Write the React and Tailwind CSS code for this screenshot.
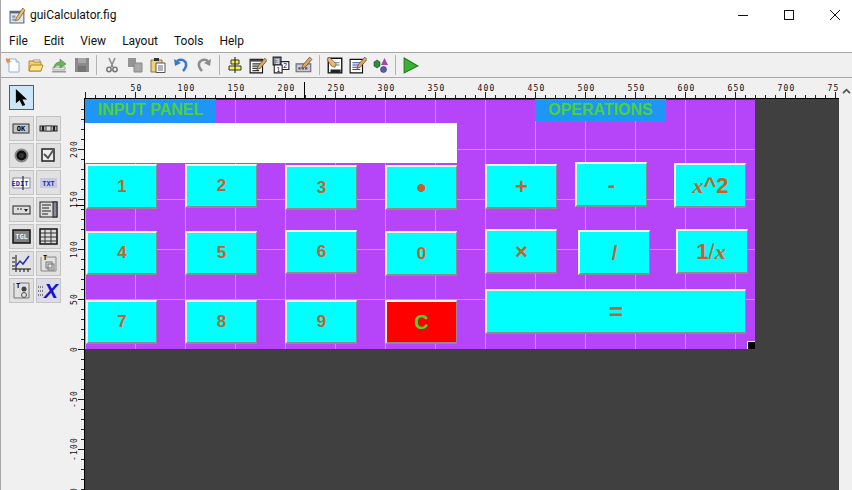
import React from 'react';

const menus = ['File', 'Edit', 'View', 'Layout', 'Tools', 'Help'];

// calculator buttons, placed on the figure canvas (figure origin is x=85, y=99)
const calcButtons = [
  { label: '1', pos: 'left-[1px] top-[65px] w-[71px] h-[45px]' },
  { label: '2', pos: 'left-[100px] top-[65px] w-[72px] h-[44px]' },
  { label: '3', pos: 'left-[200px] top-[66px] w-[72px] h-[45px]' },
  { label: '•', pos: 'left-[300px] top-[66px] w-[72px] h-[45px]', size: 'text-[28px]' },
  { label: '4', pos: 'left-[1px] top-[132px] w-[71px] h-[44px]' },
  { label: '5', pos: 'left-[100px] top-[132px] w-[72px] h-[44px]' },
  { label: '6', pos: 'left-[200px] top-[131px] w-[72px] h-[44px]' },
  { label: '0', pos: 'left-[300px] top-[132px] w-[72px] h-[45px]' },
  { label: '7', pos: 'left-[1px] top-[201px] w-[71px] h-[44px]' },
  { label: '8', pos: 'left-[100px] top-[201px] w-[72px] h-[44px]' },
  { label: '9', pos: 'left-[200px] top-[201px] w-[72px] h-[44px]' },
  { label: '+', pos: 'left-[400px] top-[65px] w-[72px] h-[45px]', size: 'text-[22px]' },
  { label: '-', pos: 'left-[490px] top-[63px] w-[72px] h-[45px]', size: 'text-[22px]' },
  { label: '×', pos: 'left-[400px] top-[130px] w-[72px] h-[45px]', size: 'text-[22px]' },
  { label: '/', pos: 'left-[493px] top-[131px] w-[72px] h-[45px]', size: 'text-[20px]' },
  { label: '=', pos: 'left-[400px] top-[190px] w-[261px] h-[45px]', size: 'text-[24px]' },
];

function Win({ className = 'w-[16px] h-[16px]', children }) {
  return <svg viewBox="0 0 16 16" className={className}>{children}</svg>;
}

const toolbar = [
  // new
  <Win key="new"><path d="M4 2h7l3 3v10H4z" fill="#fff" stroke="#8fb4d8" /><path d="M11 2v3h3" fill="#dfeaf5" stroke="#8fb4d8" /><path d="M1 1l3 1 1-1 0 3 2 1-3 0-1 2-1-2-1-1z" fill="#ef8a4a" /></Win>,
  // open
  <Win key="open"><path d="M5 3h7v5H5z" fill="#fff" stroke="#999" /><path d="M1 4h4l1 1h7v9H1z" fill="#f3cf6a" stroke="#b08a2a" /><path d="M1 14l2-6h12l-2 6z" fill="#fbe391" stroke="#b08a2a" /></Win>,
  // export
  <Win key="export"><path d="M1 14h14v1.5H1z" fill="#999" /><path d="M2 13h12V10H2z" fill="#dfe8d8" stroke="#aaa" /><path d="M3 11c0-4 3-6 6-6V2l6 5-6 4V8c-3 0-5 1-6 3z" fill="#6cb060" stroke="#4a8a40" strokeWidth=".6" /></Win>,
  // save, disabled
  <Win key="save"><path d="M1 1h14v14H1z" fill="#8a8a8a" /><path d="M4 1h8v5H4z" fill="#a8a8a8" /><path d="M4 9h8v6H4z" fill="#757575" /></Win>,
  'sep7',
  // cut
  <Win key="cut"><path d="M5 1l4 9M11 1L7 10" stroke="#8a8a8a" strokeWidth="1.5" fill="none" /><circle cx="5" cy="12.5" r="2.2" fill="none" stroke="#777" strokeWidth="1.5" /><circle cx="11" cy="12.5" r="2.2" fill="none" stroke="#777" strokeWidth="1.5" /></Win>,
  // copy
  <Win key="copy"><path d="M1 1h8v9H1z" fill="#949494" /><path d="M7 6h8v9H7z" fill="#a8a8a8" stroke="#888" /></Win>,
  // paste
  <Win key="paste"><path d="M1 3h11v12H1z" fill="#edd27a" stroke="#8a7a3a" /><path d="M4 1h5v3H4z" fill="#333" /><path d="M6 6h9v9.5H6z" fill="#fff" stroke="#555" /><path d="M8 9h5M8 11h5M8 13h5" stroke="#667" /></Win>,
  // undo
  <Win key="undo"><path d="M4 4c5-3 10 0 9 5-.4 2-1.500 3.500-3 5" stroke="#3a78c8" strokeWidth="2.500" fill="none" /><path d="M1 2l1 7 6-3z" fill="#3a78c8" /></Win>,
  // redo
  <Win key="redo"><path d="M12 4C7 1 2 4 3 9c.4 2 1.500 3.500 3 5" stroke="#8c8c8c" strokeWidth="2.500" fill="none" /><path d="M15 2l-1 7-6-3z" fill="#8c8c8c" /></Win>,
  'sep8',
  // align
  <Win key="align"><path d="M4 3h8v4H4zM2 9h12v4H2z" fill="#f5f04a" stroke="#333" /><path d="M8 0v16" stroke="#111" /></Win>,
  // menu editor
  <Win key="menu" className="w-[18px] h-[18px]"><path d="M1 3h11v12H1z" fill="#fff" stroke="#111" /><path d="M1 3h11v2H1z" fill="#444" /><path d="M3 7h7M3 9h7M3 11h6M3 13h6" stroke="#333" /><path d="M8 9l6-7 2 2-6 7-3 1z" fill="#d8a868" stroke="#6a4a20" strokeWidth=".7" /></Win>,
  // tab order
  <Win key="tab" className="w-[18px] h-[18px]"><path d="M1 1h7v7H1z" fill="#8c8ca8" stroke="#222" /><path d="M8 5h7v7H8z" fill="#fff" stroke="#222" /><path d="M2 8h7v7H2z" fill="#fff" stroke="#222" /><text x="3" y="7" fontSize="6" fontFamily="Liberation Sans" fill="#fff">3</text><text x="4" y="14" fontSize="6" fontFamily="Liberation Sans">1</text><text x="10" y="11" fontSize="6" fontFamily="Liberation Sans">2</text></Win>,
  // toolbar editor
  <Win key="tb" className="w-[18px] h-[18px]"><path d="M1 7h13v7H1z" fill="#c8c8d4" stroke="#667" /><path d="M3 10h2v2H3zM6 10h2v2H6zM9 10h2v2H9z" fill="#556" /><path d="M7 8l6-7 2 2-6 7-3 1z" fill="#d8a868" stroke="#6a4a20" strokeWidth=".7" /></Win>,
  'sep8',
  // m-file editor
  <Win key="mfile" className="w-[18px] h-[18px]"><path d="M2 2h12v13H2z" fill="#fff" stroke="#111" strokeWidth="1.200" /><path d="M4 12h9v3H4z" fill="#222" /><path d="M6 6h6M6 8h6" stroke="#777" /><path d="M1 3l2-2 6 6-1 3-3-1z" fill="#e8b878" stroke="#8a5a2a" strokeWidth=".7" /></Win>,
  // property inspector
  <Win key="prop" className="w-[18px] h-[18px]"><path d="M1 3h11v12H1z" fill="#fff" stroke="#111" /><path d="M3 6h7M3 8h7M3 10h6M3 12h7" stroke="#2a4ab8" /><path d="M8 8l6-7 2 2-6 7-3 1z" fill="#d8a868" stroke="#6a4a20" strokeWidth=".7" /></Win>,
  // object browser
  <Win key="obj"><path d="M1 5l3-2 3 2v4l-3 2-3-2z" fill="#2f8a3a" stroke="#123" strokeWidth=".5" /><path d="M11.500 1l3.500 7H8z" fill="#a04aa8" /><circle cx="10.500" cy="12.500" r="3" fill="#5a5ac0" stroke="#223" strokeWidth=".5" /></Win>,
  'sep7',
  // run
  <Win key="run" className="w-[17px] h-[17px]"><path d="M2 1l13 7.500L2 15z" fill="#3cb034" stroke="#1e7a1e" /></Win>,
];

function Pal({ children, tone = 'bg-[#e1e1e1] border-[#c4c4c4]' }) {
  return (
    <div className={`w-[25px] h-[25px] border flex items-center justify-center ${tone}`}>
      <svg viewBox="0 0 23 23" className="w-[23px] h-[23px]">{children}</svg>
    </div>
  );
}

const mono = { fontFamily: '"DejaVu Sans Mono", monospace', fontWeight: 700 };

const palette = [
  <Pal key="ok"><rect x="3" y="7" width="16" height="9" fill="#c4c4c4" stroke="#333" /><text x="11" y="14" fontSize="7" textAnchor="middle" {...mono}>OK</text></Pal>,
  <Pal key="slider"><rect x="3" y="9" width="17" height="5" fill="#aaa" stroke="#222" /><path d="M6 9v5M17 9v5" stroke="#222" strokeWidth="2" /><rect x="9" y="9" width="5" height="5" fill="#ddd" stroke="#555" /></Pal>,
  <Pal key="radio"><circle cx="11.500" cy="11.500" r="6" fill="#111" stroke="#888" strokeWidth="2" /><circle cx="11.500" cy="11.500" r="2.500" fill="#333" /></Pal>,
  <Pal key="check"><rect x="5" y="5" width="12" height="12" fill="#eee" stroke="#222" strokeWidth="1.500" /><path d="M7 10l4 4 6-9" stroke="#555" strokeWidth="2" fill="none" /></Pal>,
  <Pal key="edit"><rect x="3" y="7" width="17" height="10" fill="#fff" stroke="#88a" /><text x="10" y="15" fontSize="7" textAnchor="middle" fill="#1c2cb0" {...mono}>EDIT</text><path d="M13 5v14" stroke="#111" /></Pal>,
  <Pal key="txt"><rect x="3" y="7" width="17" height="10" fill="#c8c8e0" /><text x="11.500" y="15" fontSize="7" textAnchor="middle" fill="#1c2cb0" {...mono}>TXT</text></Pal>,
  <Pal key="popup"><rect x="3" y="8" width="17" height="8" fill="#ddd" stroke="#222" /><path d="M7 11h2M10 11h2" stroke="#222" /><path d="M14 11h4l-2 3z" fill="#222" /></Pal>,
  <Pal key="list"><rect x="3" y="4" width="17" height="15" fill="#ddd" stroke="#222" /><path d="M5 7h9M5 10h7M5 13h9M5 16h6" stroke="#222" /><rect x="16" y="4" width="4" height="15" fill="#889" stroke="#222" /></Pal>,
  <Pal key="tgl"><rect x="3" y="5" width="17" height="13" fill="#808080" stroke="#111" strokeWidth="1.500" /><text x="11.500" y="14" fontSize="7" textAnchor="middle" fill="#eee" {...mono}>TGL</text></Pal>,
  <Pal key="table"><rect x="3" y="4" width="17" height="15" fill="#ddd" stroke="#111" strokeWidth="1.500" /><path d="M3 8h17M3 12h17M3 16h17M8 4v15M14 4v15" stroke="#333" /></Pal>,
  <Pal key="axes"><path d="M6 3v17M2 17h19M2 14h3M2 10h3M2 6h3M10 17v3M14 17v3M18 17v3" stroke="#111" /><path d="M6 14l4-5 3 3 6-8" stroke="#2030c0" strokeWidth="1.500" fill="none" /></Pal>,
  <Pal key="panel"><path d="M9 5h10v14H4V5" fill="none" stroke="#888" /><text x="6" y="8" fontSize="7" {...mono}>T</text><rect x="9" y="10" width="6" height="6" fill="none" stroke="#777" /><rect x="11" y="12" width="6" height="6" fill="none" stroke="#777" /></Pal>,
  <Pal key="group"><path d="M9 4h10v15H4V4" fill="none" stroke="#777" /><text x="6" y="9" fontSize="7" {...mono}>T</text><circle cx="14" cy="10" r="2.500" fill="#444" /><circle cx="14" cy="16" r="2.500" fill="#ddd" stroke="#555" /></Pal>,
  <Pal key="activex" tone="bg-[#dcdce8] border-[#c4c4c4]"><path d="M1 8h5M1 12h5M1 16h5" stroke="#222" strokeDasharray="1 1" /><text x="14" y="19" fontSize="21" textAnchor="middle" fill="#1414c8" fontWeight="700" fontStyle="italic" fontFamily="Liberation Sans">X</text></Pal>,
];

const rulerFont = '"DejaVu Sans Mono", monospace';

function TopRuler() {
  const ticks = [];
  for (let x = 0; x < 754; x += 10) ticks.push(x);
  const labels = [];
  for (let v = 50; v <= 750; v += 50) labels.push(v);
  return (
    <svg viewBox="0 0 754 21" className="block w-[754px] h-[21px]">
      {ticks.map((x) => (
        <path key={x} d={`M${x + 0.5} ${x % 50 === 0 ? 14 : 17}V20`} stroke="#222" />
      ))}
      {labels.map((v) => (
        <text key={v} x={v + 1.5} y={13} fontSize="8" textAnchor="middle" letterSpacing="1.200" fontFamily={rulerFont} fill="#111">{v}</text>
      ))}
      <path d="M219.500 4V20" stroke="#000" />
      <path d="M0 20.500H754" stroke="#000" />
    </svg>
  );
}

function SideRuler() {
  const ticks = [];
  for (let y = 31; y < 412; y += 10) ticks.push(y);
  const labels = [200, 150, 100, 50, 0, -50, -100, -150];
  return (
    <svg viewBox="0 0 17 412" className="block w-[17px] h-[412px]">
      {ticks.map((y) => (
        <path key={y} d={`M${(y - 21) % 50 === 0 ? 10 : 13} ${y + 0.5}H16`} stroke="#222" />
      ))}
      {labels.map((v) => {
        const y = 349 - v - 78;
        return (
          <text key={v} x={6} y={y} transform={`rotate(-90 6 ${y})`} dy="3" fontSize="8" textAnchor="middle" letterSpacing="1.200" fontFamily={rulerFont} fill="#111">{v}</text>
        );
      })}
      <path d="M8 127.500H17" stroke="#000" />
      <path d="M16.500 20V412M16 20.500H17" stroke="#000" />
    </svg>
  );
}

function CalcButton({ pos, tone = 'bg-[#00ffff] text-[#c4622d]', children, textSize = 'text-[17px]', extra = '' }) {
  return (
    <div className={`absolute ${pos} ${tone} ${textSize} ${extra} flex items-center justify-center font-bold border-t-2 border-l-2 border-b-2 border-r border-t-[#f4f4f4] border-l-[#f4f4f4] border-b-[#8c8c8c] border-r-[#8c8c8c] font-['Liberation_Sans',sans-serif]`}>
      {children}
    </div>
  );
}

function MathX() {
  return <span className="font-['Liberation_Serif',serif] italic">x</span>;
}

export default function App() {
  return (
    <div className="w-[852px] h-[490px] overflow-hidden bg-white border-l border-[#a8a8a8] text-[12px] text-[#111] font-['Roboto',sans-serif]">
      {/* title bar */}
      <div className="h-[30px] flex items-center justify-between">
        <div className="flex items-center pl-[8px] gap-[4px]">
          <svg viewBox="0 0 16 16" className="w-[17px] h-[17px]">
            <path d="M1 4h13v11H1z" fill="#dfe6ee" stroke="#56657a" />
            <path d="M1 4h13v2H1z" fill="#56657a" />
            <path d="M3 8h3v2H3zM3 11h3v2H3z" fill="#8a97a8" />
            <path d="M7 10l6-9 2 2-6 9-3 1z" fill="#e8c07a" stroke="#7a5a2a" strokeWidth=".7" />
          </svg>
          <span>guiCalculator.fig</span>
        </div>
        <div className="flex items-center mr-[-6px]">
          <div className="w-[46px] flex justify-center"><div className="w-[10px] h-px bg-[#111]" /></div>
          <div className="w-[46px] flex justify-center"><div className="w-[10px] h-[10px] border border-[#111]" /></div>
          <div className="w-[46px] flex justify-center">
            <svg viewBox="0 0 10 10" className="w-[10px] h-[10px]"><path d="M0 0l10 10M10 0L0 10" stroke="#111" /></svg>
          </div>
        </div>
      </div>

      {/* menu bar */}
      <div className="h-[23px] flex items-center gap-[16px] pl-[8px] pb-[1px] border-b border-[#a8a8a8]">
        {menus.map((m) => <span key={m}>{m}</span>)}
      </div>

      {/* toolbar */}
      <div className="h-[25px] flex items-center bg-[#f0f0f0] border-b border-[#a8a8a8]">
        {toolbar.map((item, i) =>
          item === 'sep7' || item === 'sep8' ? (
            <div key={i} className={`${item === 'sep7' ? 'w-[7px]' : 'w-[8px]'} flex justify-center`}>
              <div className="w-px h-[20px] bg-[#b4b4b4]" />
            </div>
          ) : (
            <div key={i} className="w-[23px] flex items-center justify-center">{item}</div>
          )
        )}
      </div>

      {/* editor body */}
      <div className="h-[412px] flex bg-[#f0f0f0]">
        {/* component palette */}
        <div className="w-[67px] pl-[8px] pt-[7px] shrink-0">
          <div className="w-[25px] h-[25px] bg-[#cde6f7] border border-[#1f6aa5] flex items-center justify-center">
            <svg viewBox="0 0 16 20" className="w-[15px] h-[19px]"><path d="M2 1v15l4-3 3 6 3-1-3-6h5z" fill="#000" /></svg>
          </div>
          <div className="mt-[6px] grid grid-cols-[25px_25px] gap-x-[2px] gap-y-[2px]">
            {palette}
          </div>
        </div>

        <div className="w-[17px] shrink-0">
          <SideRuler />
        </div>

        <div className="w-[754px] shrink-0 flex flex-col">
          <TopRuler />
          {/* layout canvas */}
          <div className="flex-1 bg-[#404040] relative">
            <div className="w-[670px] h-[250px] relative bg-[#b644f8] bg-[linear-gradient(to_right,#cf8cf4_1px,transparent_1px),linear-gradient(to_bottom,#cf8cf4_1px,transparent_1px)] bg-[size:50px_50px]">
              <div className="absolute left-0 top-0 w-full h-px bg-[#3a2a9a]" />
              <div className="absolute left-0 top-0 w-[131px] h-[24px] pb-[2px] bg-[#1e96f5] text-[#4fd03a] font-bold text-[16px] flex items-center justify-center font-['Liberation_Sans',sans-serif]">INPUT PANEL</div>
              <div className="absolute left-0 top-[24px] w-[372px] h-[40px] bg-white" />
              <div className="absolute left-[450px] top-0 w-[131px] h-[22px] bg-[#1e96f5] text-[#4fd03a] font-bold text-[16px] flex items-center justify-center font-['Liberation_Sans',sans-serif]">OPERATIONS</div>

              {calcButtons.map((b) => (
                <CalcButton key={b.label} pos={b.pos} textSize={b.size || 'text-[17px]'}>{b.label}</CalcButton>
              ))}
              <CalcButton pos="left-[589px] top-[64px] w-[72px] h-[45px]" textSize="text-[22px]"><MathX />^2</CalcButton>
              <CalcButton pos="left-[591px] top-[130px] w-[72px] h-[45px]" textSize="text-[22px]" extra="pr-[3px]">1<span className="font-normal">/</span><MathX /></CalcButton>
              <CalcButton pos="left-[300px] top-[201px] w-[72px] h-[44px]" tone="bg-[#ff0000] text-[#3fdc1c]" textSize="text-[20px]">C</CalcButton>

              {/* resize handle */}
              <div className="absolute right-0 bottom-0 w-[8px] h-[8px] bg-black border-l border-t border-white" />
            </div>
          </div>
        </div>

        {/* ruler scroll chevron gutter */}
        <div className="flex-1 pt-[9px] pl-[3px]">
          <svg viewBox="0 0 10 8" className="w-[9px] h-[7px]"><path d="M1 7l4-4 4 4" stroke="#555" strokeWidth="2" fill="none" /></svg>
        </div>
      </div>
    </div>
  );
}
